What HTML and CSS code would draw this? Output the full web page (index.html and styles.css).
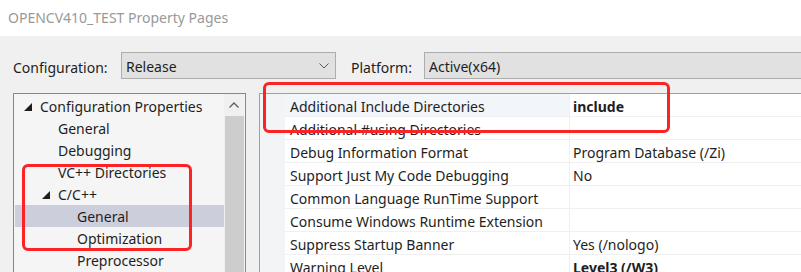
FILE: index.html
```html
<!DOCTYPE html>
<html>
<head>
<meta charset="utf-8">
<link rel="stylesheet" href="styles.css">
</head>
<body>
<div class="window">
  <div class="titlebar">OPENCV410_TEST Property Pages</div>
  <div class="main">
    <div class="toolbar">
      <span class="lbl lbl-config">Configuration:</span>
      <div class="combo combo-config">
        <span>Release</span>
        <svg class="chev" width="10" height="6" viewBox="0 0 10 6"><polyline points="0.5,0.5 5,5 9.5,0.5" fill="none" stroke="#5a5a5a" stroke-width="1"/></svg>
      </div>
      <span class="lbl lbl-platform">Platform:</span>
      <div class="combo combo-platform"><span>Active(x64)</span></div>
    </div>
    <div class="content">
      <div class="tree">
        <div class="tree-list">
          <div class="node lvl0"><svg class="tri" width="8" height="8" viewBox="0 0 8 8"><polygon points="8,0 8,8 0,8" fill="#1e1e1e"/></svg>Configuration Properties</div>
          <div class="node lvl1">General</div>
          <div class="node lvl1">Debugging</div>
          <div class="node lvl1">VC++ Directories</div>
          <div class="node lvl1 exp"><svg class="tri" width="8" height="8" viewBox="0 0 8 8"><polygon points="8,0 8,8 0,8" fill="#1e1e1e"/></svg>C/C++</div>
          <div class="node lvl2 selected">General</div>
          <div class="node lvl2">Optimization</div>
          <div class="node lvl2">Preprocessor</div>
        </div>
        <div class="scrollbar">
          <div class="sb-up"><svg width="10" height="6" viewBox="0 0 10 6"><polyline points="0.5,5.5 5,1 9.5,5.5" fill="none" stroke="#606060" stroke-width="1.4"/></svg></div>
          <div class="sb-thumb"></div>
        </div>
      </div>
      <div class="grid">
        <div class="margin-col"></div>
        <div class="rows">
          <div class="row current"><div class="name">Additional Include Directories</div><div class="val bold">include</div></div>
          <div class="row"><div class="name">Additional #using Directories</div><div class="val"></div></div>
          <div class="row"><div class="name">Debug Information Format</div><div class="val">Program Database (/Zi)</div></div>
          <div class="row"><div class="name">Support Just My Code Debugging</div><div class="val">No</div></div>
          <div class="row"><div class="name">Common Language RunTime Support</div><div class="val"></div></div>
          <div class="row"><div class="name">Consume Windows Runtime Extension</div><div class="val"></div></div>
          <div class="row"><div class="name">Suppress Startup Banner</div><div class="val">Yes (/nologo)</div></div>
          <div class="row"><div class="name">Warning Level</div><div class="val bold">Level3 (/W3)</div></div>
        </div>
      </div>
    </div>
  </div>
  <div class="mark mark-grid"></div>
  <div class="mark mark-tree"></div>
</div>
</body>
</html>
```
FILE: styles.css
```css
html, body {
  margin: 0;
  padding: 0;
}
body {
  font-family: "Noto Sans", "Open Sans", sans-serif;
  font-size: 14px;
  color: #1e1e1e;
  overflow: hidden;
}
.window {
  position: relative;
  width: 801px;
  height: 272px;
  overflow: hidden;
  background: #f0f0f0;
}
.titlebar {
  height: 36px;
  background: #ffffff;
  color: #999999;
  font-size: 14px;
  line-height: 36px;
  padding-left: 8px;
  box-sizing: border-box;
}
.main {
  background: #f0f0f0;
}
.toolbar {
  display: flex;
  align-items: center;
  padding-top: 16px;
  height: 27px;
}
.lbl {
  white-space: nowrap;
  padding-top: 3px;
}
.lbl-config {
  margin-left: 13px;
  width: 108px;
}
.lbl-platform {
  margin-left: 15px;
  width: 73px;
}
.combo {
  height: 27px;
  box-sizing: border-box;
  border: 1px solid #adadad;
  background: #e1e1e1;
  display: flex;
  align-items: center;
  padding-left: 4px;
  padding-top: 2px;
}
.combo-config {
  width: 215px;
  justify-content: space-between;
  padding-right: 6px;
}
.combo-platform {
  flex: 1;
  margin-right: -10px;
}
.chev {
  margin-bottom: 1px;
}
.content {
  display: flex;
  margin-top: 14px;
  height: 200px;
}
.tree {
  margin-left: 13px;
  width: 233px;
  box-sizing: border-box;
  border: 1px solid #828790;
  background: #f5f5f5;
  display: flex;
  height: 200px;
}
.tree-list {
  flex: 1;
  padding-top: 1px;
  padding-left: 1px;
}
.node {
  height: 22px;
  box-sizing: border-box;
  padding-top: 2px;
  line-height: 20px;
  white-space: nowrap;
  display: flex;
  align-items: center;
}
.tri {
  margin-right: 8px;
  margin-top: -1px;
}
.lvl0 { padding-left: 9px; }
.lvl1 { padding-left: 43px; }
.lvl1.exp { padding-left: 27px; }
.lvl2 { padding-left: 62px; }
.selected {
  background: #cccedb;
}
.scrollbar {
  width: 20px;
  background: #f0f0f0;
  display: flex;
  flex-direction: column;
  align-items: center;
  margin-right: 1px;
}
.sb-up {
  height: 22px;
  width: 100%;
  display: flex;
  align-items: center;
  justify-content: center;
}
.sb-thumb {
  width: 19px;
  flex: 1;
  background: #cdcdcd;
}
.grid {
  margin-left: 13px;
  flex: 1;
  border-left: 1px solid #a0a0a0;
  border-top: 1px solid #a0a0a0;
  background: #ffffff;
  display: flex;
}
.margin-col {
  width: 25px;
  background: #f3f4f6;
}
.rows {
  flex: 1;
}
.row {
  display: flex;
  height: 23px;
  box-sizing: border-box;
  border-bottom: 1px solid #f0f0f0;
  white-space: nowrap;
}
.name {
  width: 285px;
  box-sizing: border-box;
  padding-left: 5px;
  padding-top: 3px;
  line-height: 19px;
  border-right: 1px solid #f0f0f0;
}
.current .name {
  background: #f2f5f9;
}
.val {
  flex: 1;
  padding-left: 3px;
  padding-top: 3px;
  line-height: 19px;
}
.bold {
  font-weight: bold;
}
.mark {
  position: absolute;
  border: 3px solid #fb2323;
  border-radius: 6px;
  box-sizing: border-box;
}
.mark-grid {
  left: 263px;
  top: 82px;
  width: 407px;
  height: 51px;
}
.mark-tree {
  left: 22px;
  top: 164px;
  width: 170px;
  height: 87px;
}
```
